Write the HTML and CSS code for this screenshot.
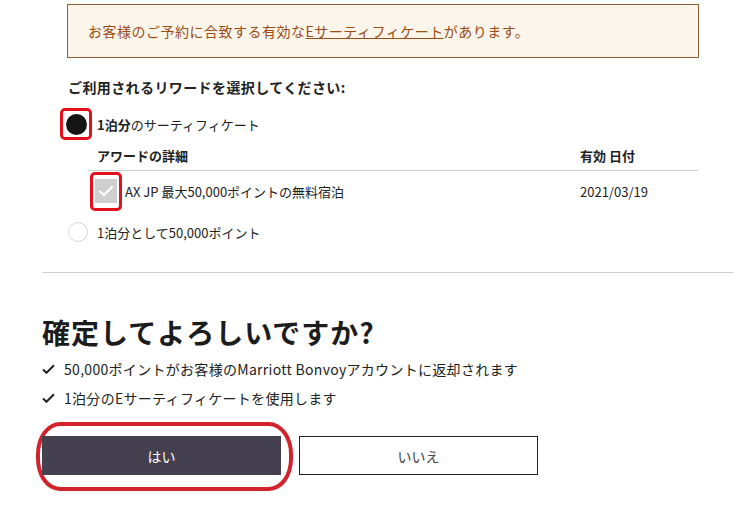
FILE: index.html
```html
<!DOCTYPE html>
<html lang="ja">
<head>
  <meta charset="UTF-8">
  <title>リワードの選択</title>
<link rel="stylesheet" href="styles.css">
</head>
<body>
  <div class="alert">お客様のご予約に合致する有効な<a href="#">Eサーティフィケート</a>があります。</div>

  <div class="reward">
    <h3 class="reward-title">ご利用されるリワードを選択してください:</h3>

    <div class="radio-row">
      <span class="mark mark-radio"><span class="radio radio-on"></span></span>
      <span><b>1泊分</b>のサーティフィケート</span>
    </div>

    <div class="award">
      <div class="award-head">
        <span class="col-name">アワードの詳細</span>
        <span class="col-date">有効 日付</span>
      </div>
      <div class="award-row">
        <span class="col-name">
          <span class="mark mark-check">
            <span class="check-box">
              <svg width="16" height="12" viewBox="0 0 16 12"><path d="M2 6.5 L6 10 L14 2" fill="none" stroke="#fff" stroke-width="2.2" stroke-linecap="round" stroke-linejoin="round"/></svg>
            </span>
          </span>
          AX JP 最大50,000ポイントの無料宿泊
        </span>
        <span class="col-date">2021/03/19</span>
      </div>
    </div>

    <div class="radio-row radio-row-2">
      <span class="radio"></span>
      <span>1泊分として50,000ポイント</span>
    </div>
  </div>

  <hr class="divider">

  <div class="confirm">
    <h2 class="confirm-title">確定してよろしいですか?</h2>
    <ul class="confirm-list">
      <li><svg width="13" height="10" viewBox="0 0 13 10"><path d="M1 5.5 L4.5 8.8 L12 1.2" fill="none" stroke="#222" stroke-width="2"/></svg>50,000ポイントがお客様のMarriott Bonvoyアカウントに返却されます</li>
      <li><svg width="13" height="10" viewBox="0 0 13 10"><path d="M1 5.5 L4.5 8.8 L12 1.2" fill="none" stroke="#222" stroke-width="2"/></svg>1泊分のEサーティフィケートを使用します</li>
    </ul>
    <div class="buttons">
      <span class="mark-yes"><button class="btn btn-yes">はい</button></span>
      <button class="btn btn-no">いいえ</button>
    </div>
  </div>
</body>
</html>
```

FILE: styles.css
```css
body {
  margin: 0;
  font-family: "Noto Sans CJK JP", sans-serif;
  font-size: 13px;
  color: #222;
  background: #fff;
}

.alert {
  box-sizing: border-box;
  height: 54px;
  margin: 4px 34px 0 67px;
  padding-left: 20px;
  display: flex;
  align-items: center;
  border: 1px solid #8e5e30;
  background: #fcf5ec;
  color: #9a4c12;
  font-size: 14px;
  letter-spacing: 0.5px;
}
.alert a {
  color: #9a4c12;
  text-decoration: underline;
}

.reward {
  padding-left: 68px;
}
.reward-title {
  margin: 19px 0 0;
  height: 20px;
  line-height: 20px;
  font-size: 14px;
  font-weight: bold;
  letter-spacing: 0.4px;
}

.radio-row {
  height: 32px;
  margin-top: 11px;
  display: flex;
  align-items: center;
  gap: 9px;
}
.radio-row b {
  font-weight: bold;
}
.radio {
  box-sizing: border-box;
  width: 20px;
  height: 20px;
  border-radius: 50%;
  border: 1px solid #d4d4d4;
  background: #fff;
}
.radio-on {
  width: 21px;
  height: 21px;
  border: none;
  background: #151515;
}
.mark {
  box-sizing: border-box;
  border: 3px solid #e3101d;
  border-radius: 5px;
  display: flex;
  align-items: center;
  justify-content: center;
}
.mark-radio {
  width: 32px;
  height: 32px;
  margin-left: -8px;
  margin-right: -4px;
}

.award {
  margin: 0 35px 0 20px;
}
.award-head {
  height: 30px;
  display: flex;
  align-items: center;
  border-bottom: 1px solid #d0d0d0;
  font-weight: bold;
}
.award-row {
  height: 40px;
  display: flex;
  align-items: center;
}
.col-name {
  flex: 1;
  padding-left: 9px;
  display: flex;
  align-items: center;
}
.award-row .col-name {
  padding-left: 2px;
}
.col-date {
  width: 118px;
}
.mark-check {
  width: 32px;
  height: 39px;
  margin-right: 3px;
}
.check-box {
  width: 22px;
  height: 24px;
  background: #cfcfcf;
  display: flex;
  align-items: center;
  justify-content: center;
}

.radio-row-2 {
  height: 24px;
  margin-top: 9px;
}

.divider {
  margin: 28px 0 0 42px;
  border: none;
  border-top: 1px solid #cfcfcf;
}

.confirm {
  padding-left: 42px;
}
.confirm-title {
  margin: 41px 0 0;
  height: 36px;
  line-height: 36px;
  font-size: 28px;
  font-weight: bold;
  letter-spacing: 1px;
  color: #1c1c1c;
}
.confirm-list {
  list-style: none;
  margin: 4px 0 0;
  padding: 0;
  font-size: 14px;
  letter-spacing: 0.3px;
}
.confirm-list li {
  height: 29px;
  display: flex;
  align-items: center;
  gap: 9px;
}

.buttons {
  margin-top: 10px;
  display: flex;
  align-items: flex-start;
  gap: 6px;
}
.mark-yes {
  margin-left: -6px;
  padding: 10px 8px 12px 2px;
  border: 4px solid #d2232c;
  border-radius: 24px / 32px;
  display: flex;
}
.btn {
  box-sizing: border-box;
  width: 239px;
  height: 39px;
  font-family: inherit;
  font-size: 14px;
  cursor: pointer;
}
.btn-yes {
  border: none;
  background: #45404f;
  color: #fff;
}
.btn-no {
  margin-top: 14px;
  border: 1px solid #222;
  background: #fff;
  color: #444;
}
```
